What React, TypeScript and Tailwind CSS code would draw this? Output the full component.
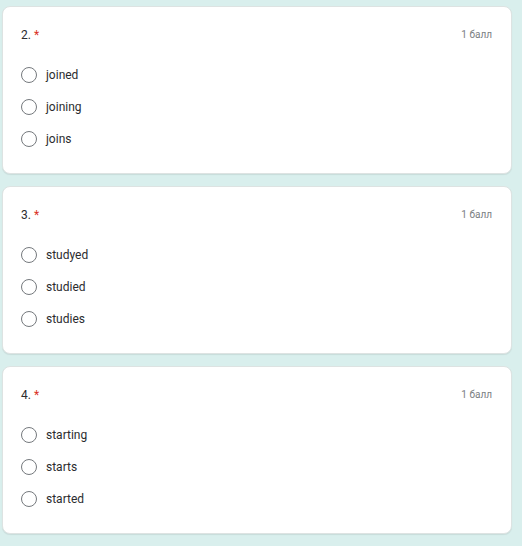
import React from "react";

const questions = [
  { n: "2.", options: ["joined", "joining", "joins"] },
  { n: "3.", options: ["studyed", "studied", "studies"] },
  { n: "4.", options: ["starting", "starts", "started"] },
];

function Card({ n, options }: { n: string; options: string[] }) {
  return (
    <div className="h-[168px] shrink-0 rounded-lg border border-[#dde3e2] bg-white pl-[18px] pr-[19px] pt-[20px] shadow-[0_1px_1px_rgba(0,0,0,0.08)]">
      <div className="flex h-4 items-center justify-between">
        <div className="text-[12px] leading-4 text-[#2b2c2e]">
          {n} <span className="text-[#d93025]">*</span>
        </div>
        <div className="text-[10px] leading-4 text-[#7a7e82]">1 балл</div>
      </div>
      <div className="mt-4 flex flex-col">
        {options.map((o) => (
          <div key={o} className="flex h-8 items-center">
            <div className="h-4 w-4 rounded-full border-[1.5px] border-[#75797d]" />
            <span className="ml-[9px] text-[12px] leading-4 text-[#2b2c2e]">{o}</span>
          </div>
        ))}
      </div>
    </div>
  );
}

export default function App() {
  return (
    <div
      className="h-[546px] w-[522px] overflow-hidden bg-[#d9efed] pl-[2px] pr-[10px] pt-[6px]"
      style={{ fontFamily: "Roboto, 'Liberation Sans', Arial, sans-serif" }}
    >
      <div className="flex flex-col gap-3">
        {questions.map((q) => (
          <Card key={q.n} n={q.n} options={q.options} />
        ))}
        <div className="h-[168px] shrink-0 rounded-lg border border-[#dde3e2] bg-white" />
      </div>
    </div>
  );
}
